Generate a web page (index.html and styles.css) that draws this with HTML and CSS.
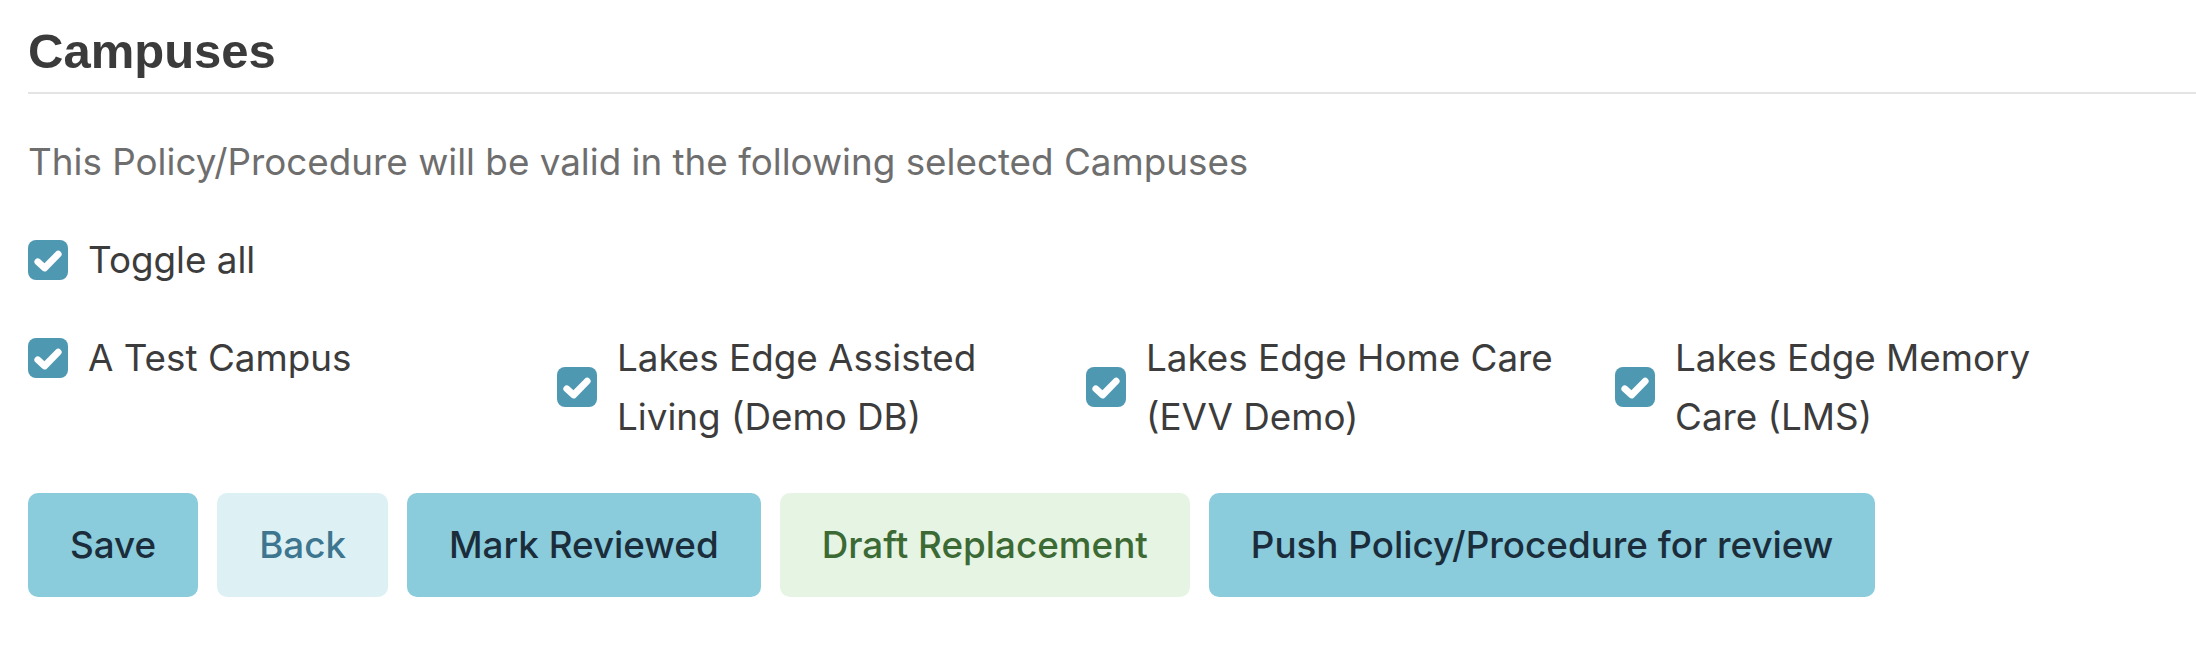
FILE: index.html
```html
<!DOCTYPE html>
<html lang="en">
<head>
<meta charset="utf-8">
<title>Campuses</title>
<link rel="stylesheet" href="styles.css">
</head>
<body>
<div class="page">
  <h2 class="section-title">Campuses</h2>
  <p class="section-desc">This Policy/Procedure will be valid in the following selected Campuses</p>

  <label class="check-item toggle-all">
    <span class="box"><svg viewBox="0 0 20 20" width="40" height="40"><rect x="0" y="0" width="20" height="20" rx="4" fill="#4f98b2"/><path d="M4.9 10.9 L8.3 14 L15.1 7.1" fill="none" stroke="#fff" stroke-width="3.4" stroke-linecap="round" stroke-linejoin="round"/></svg></span>
    <span class="text">Toggle all</span>
  </label>

  <div class="campus-grid">
    <label class="check-item">
      <span class="box"><svg viewBox="0 0 20 20" width="40" height="40"><rect x="0" y="0" width="20" height="20" rx="4" fill="#4f98b2"/><path d="M4.9 10.9 L8.3 14 L15.1 7.1" fill="none" stroke="#fff" stroke-width="3.4" stroke-linecap="round" stroke-linejoin="round"/></svg></span>
      <span class="text">A Test Campus</span>
    </label>
    <label class="check-item">
      <span class="box"><svg viewBox="0 0 20 20" width="40" height="40"><rect x="0" y="0" width="20" height="20" rx="4" fill="#4f98b2"/><path d="M4.9 10.9 L8.3 14 L15.1 7.1" fill="none" stroke="#fff" stroke-width="3.4" stroke-linecap="round" stroke-linejoin="round"/></svg></span>
      <span class="text">Lakes Edge Assisted Living (Demo DB)</span>
    </label>
    <label class="check-item">
      <span class="box"><svg viewBox="0 0 20 20" width="40" height="40"><rect x="0" y="0" width="20" height="20" rx="4" fill="#4f98b2"/><path d="M4.9 10.9 L8.3 14 L15.1 7.1" fill="none" stroke="#fff" stroke-width="3.4" stroke-linecap="round" stroke-linejoin="round"/></svg></span>
      <span class="text">Lakes Edge Home Care (EVV Demo)</span>
    </label>
    <label class="check-item">
      <span class="box"><svg viewBox="0 0 20 20" width="40" height="40"><rect x="0" y="0" width="20" height="20" rx="4" fill="#4f98b2"/><path d="M4.9 10.9 L8.3 14 L15.1 7.1" fill="none" stroke="#fff" stroke-width="3.4" stroke-linecap="round" stroke-linejoin="round"/></svg></span>
      <span class="text">Lakes Edge Memory Care (LMS)</span>
    </label>
  </div>

  <div class="actions">
    <button class="btn btn-primary">Save</button>
    <button class="btn btn-light">Back</button>
    <button class="btn btn-primary">Mark Reviewed</button>
    <button class="btn btn-success">Draft Replacement</button>
    <button class="btn btn-primary">Push Policy/Procedure for review</button>
  </div>
</div>
</body>
</html>
```
FILE: styles.css
```css
html, body {
  margin: 0;
  padding: 0;
  background: #ffffff;
}

.page {
  padding: 0 0 0 28px;
  font-family: "Inter", "Noto Sans", sans-serif;
  color: #3c3c3c;
}

.section-title {
  margin: 24px 0 0 0;
  padding-bottom: 13px;
  border-bottom: 2px solid #e4e4e4;
  font-family: "Liberation Sans", Arial, sans-serif;
  font-weight: 700;
  font-size: 49px;
  line-height: 55px;
  color: #3b3b3b;
}

.section-desc {
  margin: 42px 0 0 0;
  font-size: 36.8px;
  line-height: 51px;
  color: #6e6e6e;
}

.check-item {
  display: flex;
  align-items: center;
  gap: 20px;
  font-size: 36.8px;
  line-height: 59px;
  color: #3c3c3c;
}

.check-item .box {
  flex: none;
  width: 40px;
  height: 40px;
  display: block;
}

.check-item .box svg {
  display: block;
}

.toggle-all {
  margin-top: 43px;
}

.campus-grid {
  margin-top: 39px;
  display: grid;
  grid-template-columns: repeat(4, 492px);
  column-gap: 37px;
  align-items: start;
}

.actions {
  margin-top: 47px;
  display: flex;
  gap: 19px;
}

.btn {
  border: none;
  border-radius: 10px;
  padding: 25px 42px;
  font-family: "Inter", "Noto Sans", sans-serif;
  font-size: 36.8px;
  font-weight: 500;
  line-height: 54px;
  cursor: pointer;
}

.btn-primary {
  background: #8acbdc;
  color: #1b2d3a;
}

.btn-light {
  background: #ddf1f5;
  color: #3e7690;
}

.btn-success {
  background: #e6f4e4;
  color: #3c6a35;
}
```
